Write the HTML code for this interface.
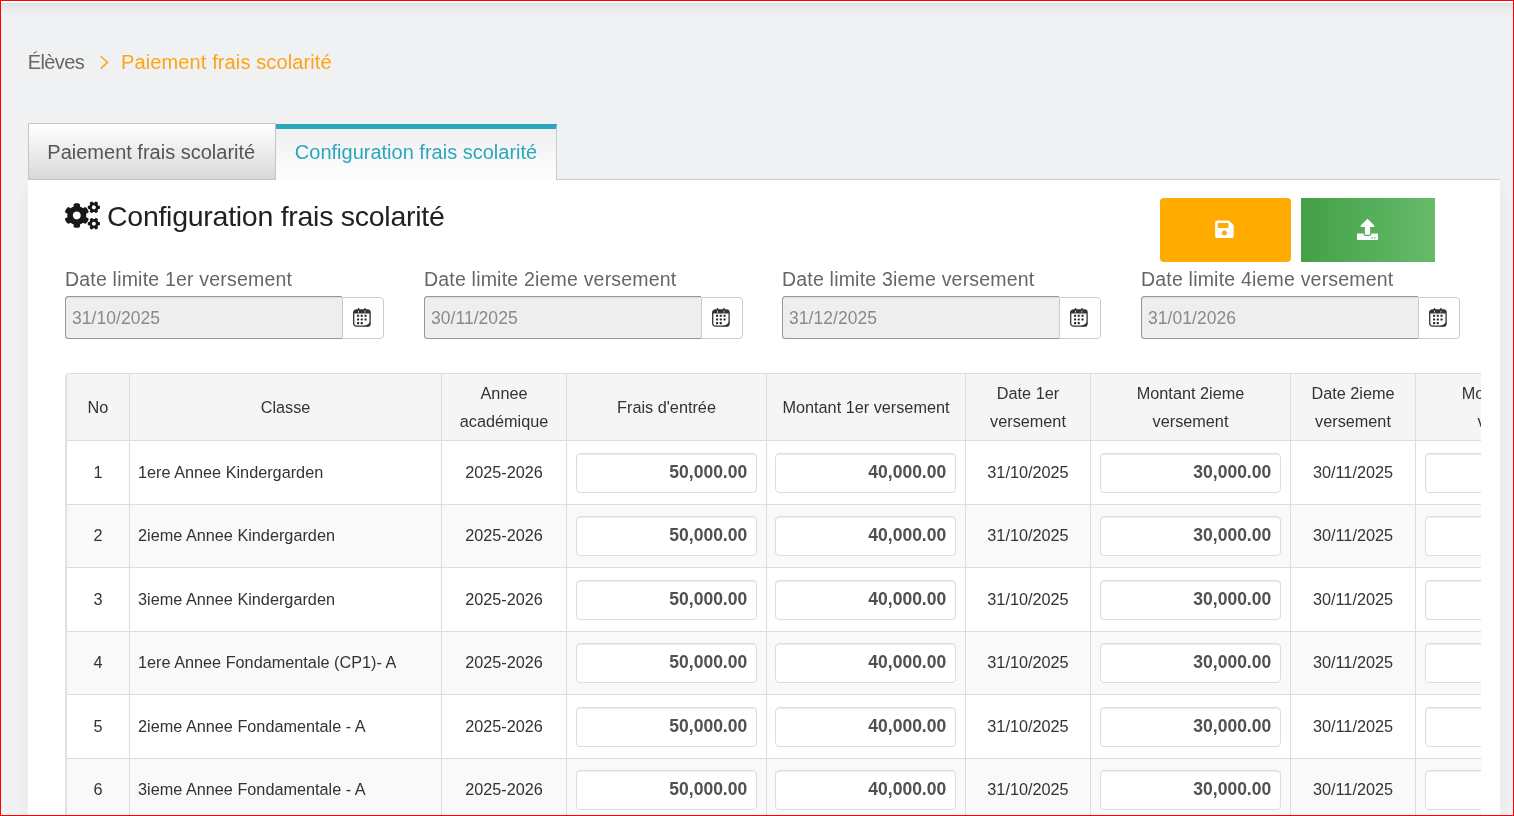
<!DOCTYPE html>
<html lang="fr">
<head>
<meta charset="utf-8">
<title>Paiement frais scolarité</title>
<style>
*{box-sizing:border-box;margin:0;padding:0}
html,body{width:1514px;height:816px;overflow:hidden}
body{position:relative;background:#f0f1f3;font-family:"Liberation Sans",sans-serif;color:#333}
#root{position:absolute;left:0;top:0;width:1514px;height:816px;will-change:transform}
#frame{position:absolute;left:0;top:0;width:1514px;height:816px;border:1px solid #ff0000;z-index:50;pointer-events:none}
#topwhite{position:absolute;left:1px;top:1px;width:1512px;height:2px;background:#fff}
#topshadow{position:absolute;left:1px;top:3px;width:1512px;height:15px;background:linear-gradient(#dfe0e2 0,#e5e6e8 20%,#eaebed 42%,#eeeff1 70%,#f0f1f3 100%)}
#bc{position:absolute;left:28px;top:50px;height:24px;line-height:24px;font-size:20px;color:#666;white-space:nowrap}
#bc .el{letter-spacing:-0.6px;margin-left:-0.3px}
#bc .cur{position:absolute;left:93px;top:0;color:#ffa413;letter-spacing:0.12px;margin-left:0}
#bc svg{position:absolute;left:70.5px;top:4.5px}
.tab{position:absolute;top:123px;height:57px;font-size:20px;line-height:56px;text-align:center;white-space:nowrap}
#tab1{left:28px;width:248px;text-indent:-1.5px;border:1px solid #c4c4c4;background:linear-gradient(#ffffff,#d9d9d9);color:#555}
#tab2{left:276px;top:124px;height:56px;width:281px;border-top:5px solid #2ba7bd;border-right:1px solid #ccc;background:linear-gradient(#efeff0,#ffffff);color:#2ba7bd;line-height:46px}
#panel{position:absolute;left:28px;top:180px;width:1472px;height:660px;background:#fff;box-shadow:0 6px 16px rgba(0,0,0,.045)}
#panelline{position:absolute;left:557px;top:179px;width:943px;height:1px;background:#ccc}
#h{position:absolute;left:107px;top:199px;font-size:28.5px;letter-spacing:-0.27px;line-height:34px;color:#212121;white-space:nowrap}
#cogs{position:absolute;left:65px;top:201px}
#btn1{position:absolute;left:1160px;top:198px;width:131px;height:64px;background:#ffab00;border-radius:4px}
#btn2{position:absolute;left:1301px;top:198px;width:134px;height:64px;background:linear-gradient(90deg,#43a047,#66bb6a)}
.lbl{position:absolute;top:267px;letter-spacing:0.2px;font-size:19.5px;line-height:24px;color:#666;white-space:nowrap}
.din{position:absolute;top:296px;width:277px;height:43px;background:#eee;border:1px solid #979797;border-right:0;border-radius:3.5px 0 0 3.5px;box-shadow:inset 0 1px 1px rgba(0,0,0,.075);font-size:17.5px;letter-spacing:0.04px;line-height:43px;padding-left:6px;color:#8a8a8a}
.cal{position:absolute;top:297px;width:42px;height:42px;background:#fff;border:1px solid #ccc;border-radius:0 4px 4px 0}
#tw{position:absolute;left:65px;top:373px;width:1416px;height:443px;overflow:hidden;border-left:1px solid #e4e4e4;border-top-left-radius:4px}
table{border-collapse:collapse;table-layout:fixed;width:1650px;margin:0;font-size:16.25px;color:#333}
th,td{border:1px solid #ddd;text-align:center;vertical-align:middle;font-weight:normal;padding:0}
th{background:#f5f5f5;height:67px;line-height:28px}
td{height:63.5px}
tr.e td{background:#f9f9f9}
td.l{text-align:left;padding-left:8px}
.amt{display:block;margin:12px auto 0;width:181px;height:40px;border:1px solid #ddd;border-radius:4px;background:#fff;box-shadow:inset 0 1px 1px rgba(0,0,0,.075);text-align:right;padding-right:8.8px;line-height:37px;font-weight:bold;font-size:17.5px;color:#505050}
tr.e .amt{margin-top:11px}
td.a{vertical-align:top}
td:nth-child(5) .amt{margin-left:8px}
</style>
</head>
<body>
<div id="root">
<div id="topwhite"></div><div id="topshadow"></div>
<div id="bc"><span class="el">Élèves</span><svg width="11" height="15" viewBox="0 0 11 15"><path d="M1.7 1.2 L8.5 7.4 L1.7 13.6" fill="none" stroke="#ffa413" stroke-width="1.5"/></svg><span class="cur">Paiement frais scolarité</span></div>
<div class="tab" id="tab1">Paiement frais scolarité</div>
<div class="tab" id="tab2">Configuration frais scolarité</div>
<div id="panel"></div><div id="panelline"></div>
<svg id="cogs" width="35" height="28" viewBox="0 -10 640 512" style="overflow:visible"><path fill="#181818" d="M512.1 191l-8.2 14.3c-3 5.300-9.4 7.500-15.100 5.400-11.800-4.400-22.600-10.700-32.100-18.600-4.600-3.800-5.800-10.500-2.800-15.700l8.200-14.300c-6.900-8-12.300-17.300-15.900-27.400h-16.500c-6 0-11.200-4.300-12.200-10.300-2-12-2.100-24.600 0-37.100 1-6 6.200-10.4 12.200-10.400h16.500c3.600-10.100 9-19.4 15.900-27.400l-8.200-14.300c-3-5.200-1.900-11.900 2.800-15.7 9.500-7.900 20.400-14.2 32.100-18.600 5.700-2.100 12.100.1 15.100 5.400l8.2 14.300c10.500-1.900 21.200-1.900 31.7 0L552 6.300c3-5.300 9.400-7.5 15.100-5.4 11.800 4.4 22.600 10.7 32.100 18.600 4.600 3.800 5.800 10.5 2.800 15.700l-8.2 14.300c6.900 8 12.300 17.300 15.900 27.400h16.500c6 0 11.2 4.300 12.2 10.300 2 12 2.100 24.600 0 37.100-1 6-6.2 10.400-12.2 10.400h-16.500c-3.600 10.100-9 19.400-15.900 27.400l8.2 14.300c3 5.2 1.900 11.900-2.800 15.700-9.5 7.900-20.4 14.200-32.100 18.600-5.7 2.100-12.100-.1-15.100-5.400l-8.200-14.300c-10.4 1.900-21.2 1.900-31.7 0zm-10.500-58.800c38.5 29.600 82.400-14.300 52.800-52.800-38.500-29.700-82.4 14.300-52.800 52.800zM386.300 286.100l33.7 16.800c10.100 5.800 14.5 18.100 10.5 29.100-8.900 24.200-26.4 46.400-42.600 65.800-7.4 8.900-20.2 11.100-30.300 5.300l-29.100-16.800c-16 13.700-34.600 24.600-54.900 31.700v33.600c0 11.600-8.300 21.600-19.7 23.600-24.600 4.200-50.4 4.400-75.900 0-11.500-2-20-11.900-20-23.600V418c-20.300-7.200-38.900-18-54.900-31.700L74 403c-10 5.800-22.900 3.600-30.300-5.300-16.200-19.400-33.300-41.600-42.200-65.700-4-10.900.4-23.2 10.500-29.100l33.300-16.800c-3.900-20.900-3.900-42.4 0-63.400L12 205.800c-10.100-5.800-14.600-18.100-10.500-29 8.900-24.2 26-46.4 42.200-65.800 7.400-8.900 20.200-11.100 30.300-5.300l29.100 16.800c16-13.7 34.600-24.600 54.900-31.700V57.100c0-11.5 8.200-21.5 19.600-23.5 24.600-4.2 50.500-4.4 76-.1 11.5 2 20 11.900 20 23.600v33.600c20.300 7.2 38.900 18 54.900 31.700l29.100-16.800c10-5.800 22.900-3.600 30.300 5.300 16.2 19.4 33.2 41.600 42.100 65.800 4 10.900.1 23.200-10 29.100l-33.7 16.800c3.900 21 3.900 42.5 0 63.500zm-117.600 21.100c59.200-77-28.700-164.900-105.700-105.700-59.2 77 28.7 164.900 105.7 105.700zm243.4 182.700l-8.2 14.300c-3 5.300-9.4 7.500-15.100 5.400-11.800-4.400-22.600-10.700-32.100-18.600-4.600-3.800-5.800-10.500-2.800-15.700l8.200-14.300c-6.900-8-12.300-17.300-15.900-27.400h-16.500c-6 0-11.200-4.300-12.200-10.300-2-12-2.100-24.600 0-37.100 1-6 6.200-10.4 12.200-10.400h16.500c3.600-10.100 9-19.4 15.900-27.400l-8.200-14.300c-3-5.200-1.900-11.900 2.800-15.7 9.500-7.900 20.400-14.2 32.100-18.600 5.700-2.100 12.100.1 15.100 5.400l8.2 14.300c10.500-1.900 21.200-1.900 31.7 0l8.200-14.300c3-5.300 9.400-7.5 15.100-5.4 11.800 4.4 22.600 10.7 32.100 18.600 4.600 3.800 5.800 10.5 2.800 15.700l-8.2 14.300c6.900 8 12.300 17.300 15.900 27.400h16.500c6 0 11.2 4.300 12.2 10.300 2 12 2.100 24.600 0 37.100-1 6-6.2 10.400-12.2 10.400h-16.500c-3.600 10.100-9 19.400-15.900 27.400l8.2 14.300c3 5.2 1.900 11.900-2.800 15.700-9.5 7.900-20.4 14.200-32.100 18.600-5.7 2.100-12.100-.1-15.100-5.400l-8.200-14.300c-10.4 1.900-21.2 1.900-31.7 0zM501.600 431c38.5 29.600 82.400-14.300 52.800-52.800-38.500-29.600-82.4 14.300-52.800 52.800z"/></svg>
<div id="h">Configuration frais scolarité</div>
<div id="btn1"><svg width="18.5" height="20" viewBox="-4 -9 448 512" preserveAspectRatio="none" style="position:absolute;left:55px;top:21px;overflow:visible"><path fill="#fff" d="M433.941 129.941l-83.882-83.882A48 48 0 0 0 316.118 32H48C21.490 32 0 53.490 0 80v352c0 26.510 21.490 48 48 48h352c26.510 0 48-21.490 48-48V163.882a48 48 0 0 0-14.059-33.941zM224 416c-35.346 0-64-28.654-64-64 0-35.346 28.654-64 64-64s64 28.654 64 64c0 35.346-28.654 64-64 64zm96-304.520V212c0 6.627-5.373 12-12 12H76c-6.627 0-12-5.373-12-12V108c0-6.627 5.373-12 12-12h228.520c3.183 0 6.235 1.264 8.485 3.515l3.480 3.480A11.996 11.996 0 0 1 320 111.480z"/></svg></div>
<div id="btn2"><svg width="21" height="21" viewBox="0 0 512 512" style="position:absolute;left:56.2px;top:21px"><path fill="#fff" d="M296 384h-80c-13.300 0-24-10.700-24-24V192h-87.700c-17.800 0-26.700-21.500-14.100-34.100L242.300 5.700c7.500-7.5 19.800-7.5 27.300 0l152.2 152.200c12.600 12.600 3.7 34.100-14.100 34.100H320v168c0 13.300-10.7 24-24 24zm216-8v112c0 13.300-10.7 24-24 24H24c-13.300 0-24-10.700-24-24V376c0-13.300 10.700-24 24-24h136v8c0 30.900 25.100 56 56 56h80c30.900 0 56-25.100 56-56v-8h136c13.300 0 24 10.7 24 24zm-124 88c0-11-9-20-20-20s-20 9-20 20 9 20 20 20 20-9 20-20zm64 0c0-11-9-20-20-20s-20 9-20 20 9 20 20 20 20-9 20-20z"/></svg></div>
<div class="lbl" style="left:65px">Date limite 1er versement</div>
<div class="lbl" style="left:424px">Date limite 2ieme versement</div>
<div class="lbl" style="left:782px">Date limite 3ieme versement</div>
<div class="lbl" style="left:1141px">Date limite 4ieme versement</div>
<div class="din" style="left:65px">31/10/2025</div><div class="cal" style="left:342px"><svg width="19" height="20" viewBox="0 0 19 20" style="position:absolute;left:10px;top:10px"><rect x="4.8" y="0" width="1.5" height="3.2" rx=".6" fill="#333"/><rect x="11.2" y="0" width="1.5" height="3.2" rx=".6" fill="#333"/><rect x=".7" y="1.9" width="16.4" height="16.3" rx="2.7" fill="#fff" stroke="#333" stroke-width="1.3"/><path d="M.7 5.600V4.600a2.700 2.700 0 0 1 2.700-2.700h11a2.700 2.700 0 0 1 2.700 2.700v1z" fill="#333"/><rect x="5.1" y="2.8" width=".9" height="1.8" fill="#ddd"/><rect x="11.5" y="2.8" width=".9" height="1.8" fill="#ddd"/><path d="M17.100 13.200c-1 3-3.500 4.200-7.500 5h5a2.600 2.600 0 0 0 2.500-2.600z" fill="#333"/><g fill="#222"><rect x="4" y="6.7" width="2.1" height="2.1" rx=".4"/><rect x="7.7" y="6.7" width="2.1" height="2.1" rx=".4"/><rect x="11.5" y="6.7" width="2.1" height="2.1" rx=".4"/><rect x="4" y="10.4" width="2.1" height="2.1" rx=".4"/><rect x="7.7" y="10.4" width="2.1" height="2.1" rx=".4"/><rect x="11.5" y="10.4" width="2.1" height="2.1" rx=".4"/><rect x="4" y="14.1" width="2.1" height="2.1" rx=".4"/><rect x="7.7" y="14.1" width="2.1" height="2.1" rx=".4"/></g></svg></div>
<div class="din" style="left:424px">30/11/2025</div><div class="cal" style="left:701px"><svg width="19" height="20" viewBox="0 0 19 20" style="position:absolute;left:10px;top:10px"><rect x="4.8" y="0" width="1.5" height="3.2" rx=".6" fill="#333"/><rect x="11.2" y="0" width="1.5" height="3.2" rx=".6" fill="#333"/><rect x=".7" y="1.9" width="16.4" height="16.3" rx="2.7" fill="#fff" stroke="#333" stroke-width="1.3"/><path d="M.7 5.600V4.600a2.700 2.700 0 0 1 2.700-2.700h11a2.700 2.700 0 0 1 2.700 2.700v1z" fill="#333"/><rect x="5.1" y="2.8" width=".9" height="1.8" fill="#ddd"/><rect x="11.5" y="2.8" width=".9" height="1.8" fill="#ddd"/><path d="M17.100 13.200c-1 3-3.500 4.200-7.500 5h5a2.600 2.600 0 0 0 2.500-2.600z" fill="#333"/><g fill="#222"><rect x="4" y="6.7" width="2.1" height="2.1" rx=".4"/><rect x="7.7" y="6.7" width="2.1" height="2.1" rx=".4"/><rect x="11.5" y="6.7" width="2.1" height="2.1" rx=".4"/><rect x="4" y="10.4" width="2.1" height="2.1" rx=".4"/><rect x="7.7" y="10.4" width="2.1" height="2.1" rx=".4"/><rect x="11.5" y="10.4" width="2.1" height="2.1" rx=".4"/><rect x="4" y="14.1" width="2.1" height="2.1" rx=".4"/><rect x="7.7" y="14.1" width="2.1" height="2.1" rx=".4"/></g></svg></div>
<div class="din" style="left:782px">31/12/2025</div><div class="cal" style="left:1059px"><svg width="19" height="20" viewBox="0 0 19 20" style="position:absolute;left:10px;top:10px"><rect x="4.8" y="0" width="1.5" height="3.2" rx=".6" fill="#333"/><rect x="11.2" y="0" width="1.5" height="3.2" rx=".6" fill="#333"/><rect x=".7" y="1.9" width="16.4" height="16.3" rx="2.7" fill="#fff" stroke="#333" stroke-width="1.3"/><path d="M.7 5.600V4.600a2.700 2.700 0 0 1 2.700-2.700h11a2.700 2.700 0 0 1 2.700 2.700v1z" fill="#333"/><rect x="5.1" y="2.8" width=".9" height="1.8" fill="#ddd"/><rect x="11.5" y="2.8" width=".9" height="1.8" fill="#ddd"/><path d="M17.100 13.200c-1 3-3.500 4.200-7.500 5h5a2.600 2.600 0 0 0 2.500-2.600z" fill="#333"/><g fill="#222"><rect x="4" y="6.7" width="2.1" height="2.1" rx=".4"/><rect x="7.7" y="6.7" width="2.1" height="2.1" rx=".4"/><rect x="11.5" y="6.7" width="2.1" height="2.1" rx=".4"/><rect x="4" y="10.4" width="2.1" height="2.1" rx=".4"/><rect x="7.7" y="10.4" width="2.1" height="2.1" rx=".4"/><rect x="11.5" y="10.4" width="2.1" height="2.1" rx=".4"/><rect x="4" y="14.1" width="2.1" height="2.1" rx=".4"/><rect x="7.7" y="14.1" width="2.1" height="2.1" rx=".4"/></g></svg></div>
<div class="din" style="left:1141px">31/01/2026</div><div class="cal" style="left:1418px"><svg width="19" height="20" viewBox="0 0 19 20" style="position:absolute;left:10px;top:10px"><rect x="4.8" y="0" width="1.5" height="3.2" rx=".6" fill="#333"/><rect x="11.2" y="0" width="1.5" height="3.2" rx=".6" fill="#333"/><rect x=".7" y="1.9" width="16.4" height="16.3" rx="2.7" fill="#fff" stroke="#333" stroke-width="1.3"/><path d="M.7 5.600V4.600a2.700 2.700 0 0 1 2.700-2.700h11a2.700 2.700 0 0 1 2.700 2.700v1z" fill="#333"/><rect x="5.1" y="2.8" width=".9" height="1.8" fill="#ddd"/><rect x="11.5" y="2.8" width=".9" height="1.8" fill="#ddd"/><path d="M17.100 13.200c-1 3-3.500 4.200-7.500 5h5a2.600 2.600 0 0 0 2.500-2.600z" fill="#333"/><g fill="#222"><rect x="4" y="6.7" width="2.1" height="2.1" rx=".4"/><rect x="7.7" y="6.7" width="2.1" height="2.1" rx=".4"/><rect x="11.5" y="6.7" width="2.1" height="2.1" rx=".4"/><rect x="4" y="10.4" width="2.1" height="2.1" rx=".4"/><rect x="7.7" y="10.4" width="2.1" height="2.1" rx=".4"/><rect x="11.5" y="10.4" width="2.1" height="2.1" rx=".4"/><rect x="4" y="14.1" width="2.1" height="2.1" rx=".4"/><rect x="7.7" y="14.1" width="2.1" height="2.1" rx=".4"/></g></svg></div>
<div id="tw">
<table>
<colgroup><col style="width:63px"><col style="width:312px"><col style="width:125px"><col style="width:200px"><col style="width:199px"><col style="width:125px"><col style="width:200px"><col style="width:125px"><col style="width:200px"><col style="width:101px"></colgroup>
<tr><th>No</th><th>Classe</th><th>Annee<br>académique</th><th>Frais d'entrée</th><th>Montant 1er versement</th><th>Date 1er<br>versement</th><th>Montant 2ieme<br>versement</th><th>Date 2ieme<br>versement</th><th>Montant 3ieme<br>versement</th><th></th></tr>
<tr><td>1</td><td class="l">1ere Annee Kindergarden</td><td>2025-2026</td><td class="a"><span class="amt">50,000.00</span></td><td class="a"><span class="amt">40,000.00</span></td><td>31/10/2025</td><td class="a"><span class="amt">30,000.00</span></td><td>30/11/2025</td><td class="a"><span class="amt">20,000.00</span></td><td></td></tr>
<tr class="e"><td>2</td><td class="l">2ieme Annee Kindergarden</td><td>2025-2026</td><td class="a"><span class="amt">50,000.00</span></td><td class="a"><span class="amt">40,000.00</span></td><td>31/10/2025</td><td class="a"><span class="amt">30,000.00</span></td><td>30/11/2025</td><td class="a"><span class="amt">20,000.00</span></td><td></td></tr>
<tr><td>3</td><td class="l">3ieme Annee Kindergarden</td><td>2025-2026</td><td class="a"><span class="amt">50,000.00</span></td><td class="a"><span class="amt">40,000.00</span></td><td>31/10/2025</td><td class="a"><span class="amt">30,000.00</span></td><td>30/11/2025</td><td class="a"><span class="amt">20,000.00</span></td><td></td></tr>
<tr class="e"><td>4</td><td class="l">1ere Annee Fondamentale (CP1)- A</td><td>2025-2026</td><td class="a"><span class="amt">50,000.00</span></td><td class="a"><span class="amt">40,000.00</span></td><td>31/10/2025</td><td class="a"><span class="amt">30,000.00</span></td><td>30/11/2025</td><td class="a"><span class="amt">20,000.00</span></td><td></td></tr>
<tr><td>5</td><td class="l">2ieme Annee Fondamentale - A</td><td>2025-2026</td><td class="a"><span class="amt">50,000.00</span></td><td class="a"><span class="amt">40,000.00</span></td><td>31/10/2025</td><td class="a"><span class="amt">30,000.00</span></td><td>30/11/2025</td><td class="a"><span class="amt">20,000.00</span></td><td></td></tr>
<tr class="e"><td>6</td><td class="l">3ieme Annee Fondamentale - A</td><td>2025-2026</td><td class="a"><span class="amt">50,000.00</span></td><td class="a"><span class="amt">40,000.00</span></td><td>31/10/2025</td><td class="a"><span class="amt">30,000.00</span></td><td>30/11/2025</td><td class="a"><span class="amt">20,000.00</span></td><td></td></tr>
</table>
</div>
</div>
<div id="frame"></div>
</body>
</html>
